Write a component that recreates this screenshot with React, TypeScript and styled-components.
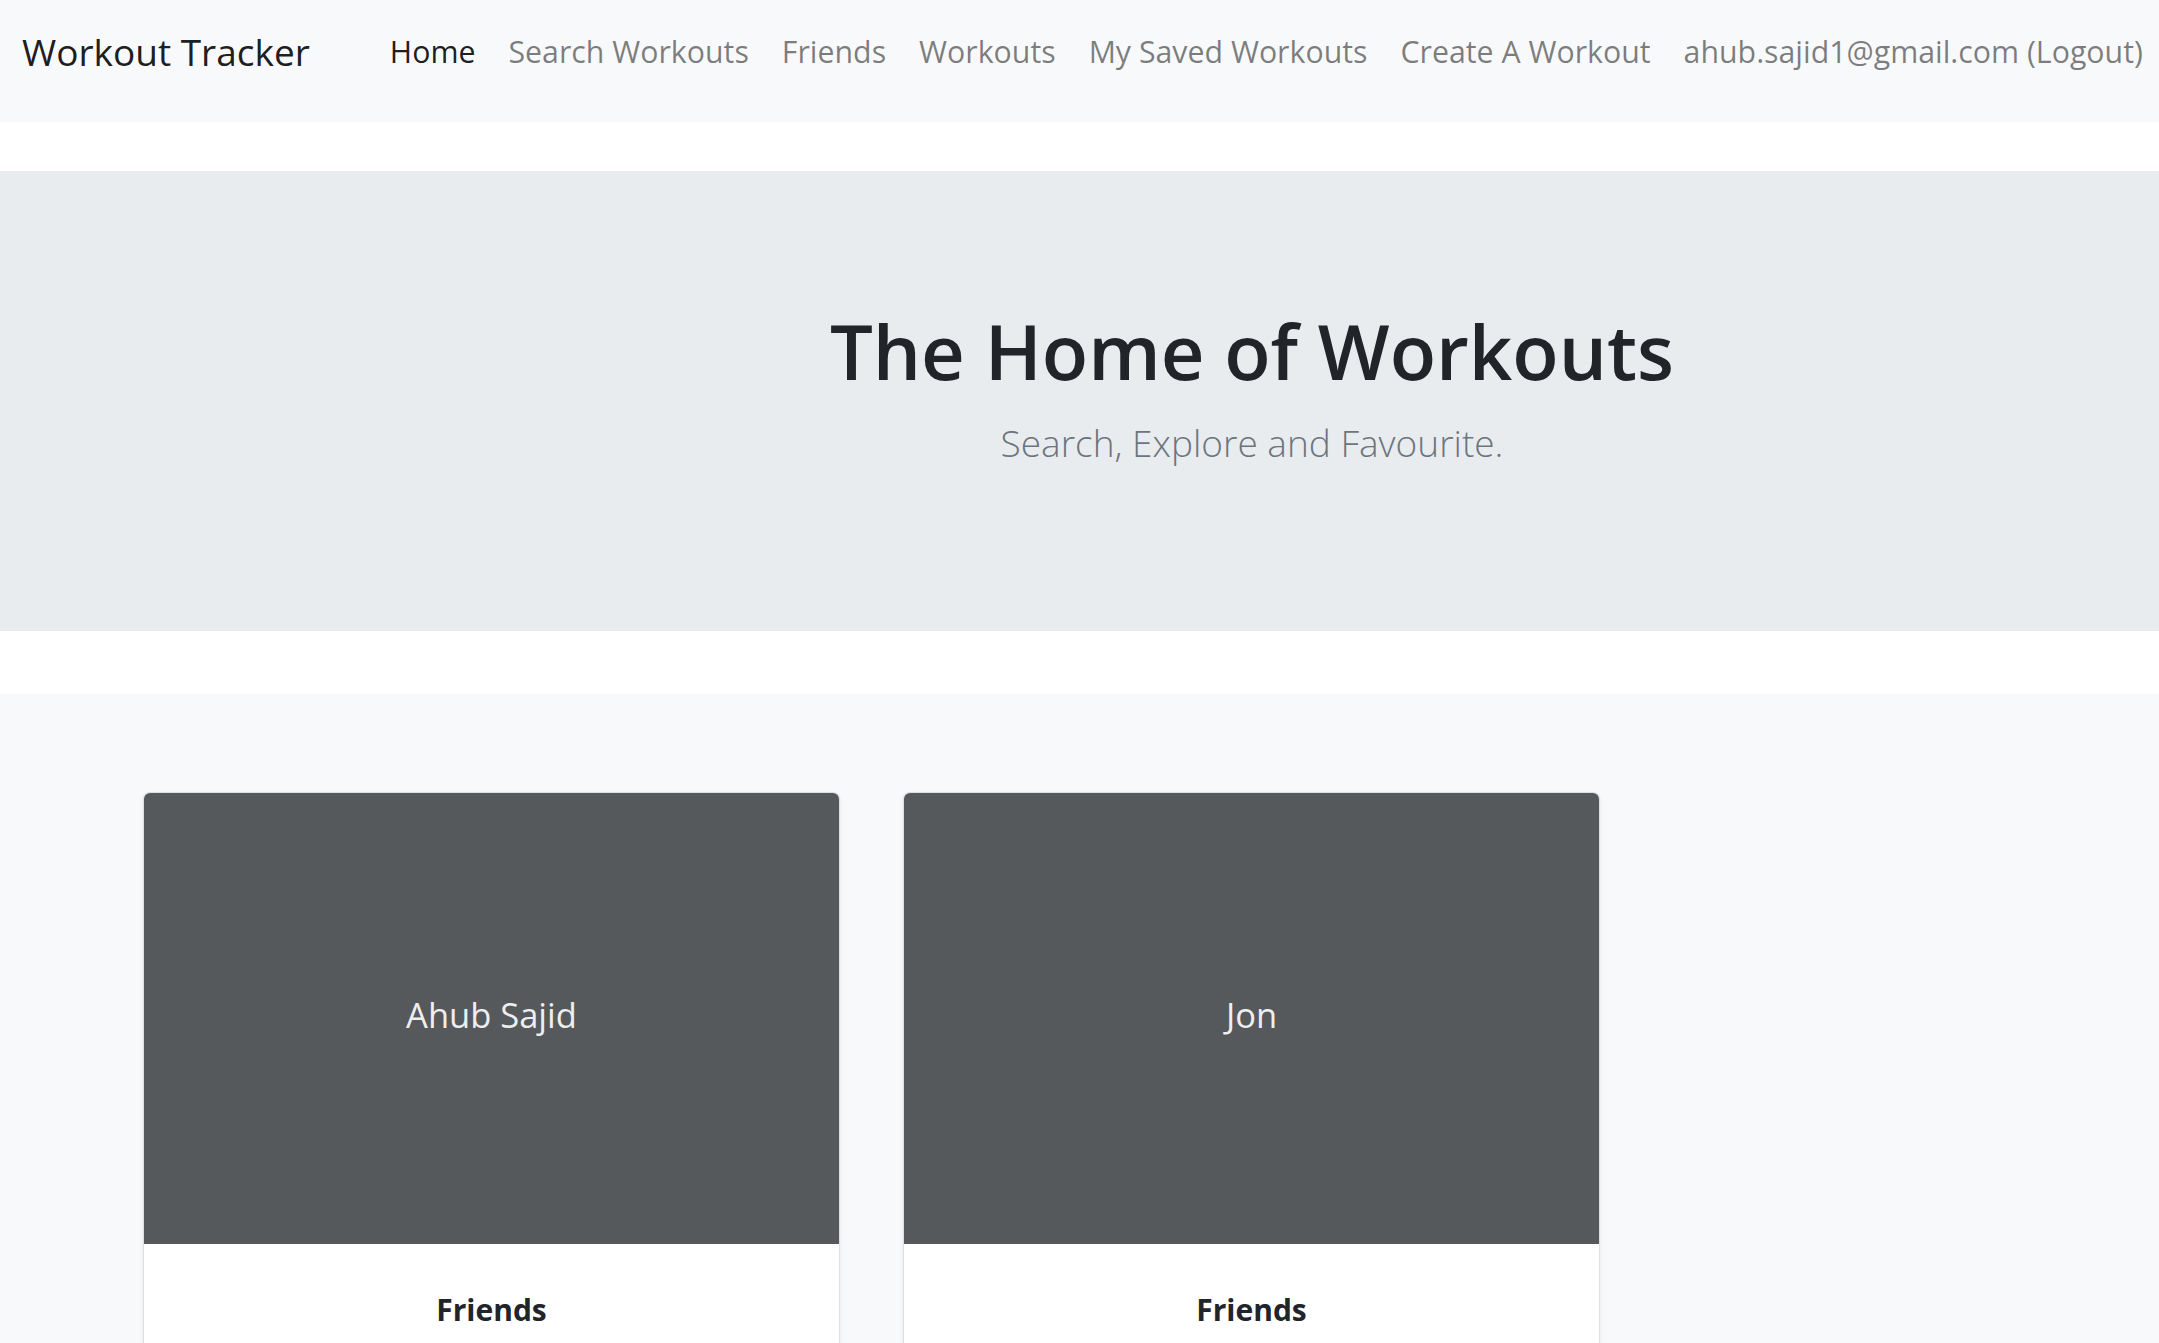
import React from "react";
import styled, { createGlobalStyle } from "styled-components";

const GlobalStyle = createGlobalStyle`
  html, body {
    margin: 0;
    padding: 0;
    overflow-x: hidden;
    background: #ffffff;
  }
  body {
    font-family: "Open Sans", "Noto Sans", "Liberation Sans", sans-serif;
    color: #212529;
  }
  * { box-sizing: border-box; }
`;

const Navbar = styled.nav`
  height: 122px;
  background: #f8f9fa;
  padding: 0 18px 18px 22px;
  display: flex;
  align-items: center;
`;

const Brand = styled.a`
  font-size: 37px;
  line-height: 1.5;
  color: rgba(0, 0, 0, 0.9);
  text-decoration: none;
  margin-right: 80px;
  white-space: nowrap;
`;

const NavList = styled.ul`
  list-style: none;
  margin: 0;
  padding: 0;
  display: flex;
  gap: 33px;
`;

const NavLink = styled.a<{ $active?: boolean }>`
  font-size: 30.3px;
  line-height: 1.5;
  color: ${(p) => (p.$active ? "rgba(0,0,0,0.9)" : "rgba(0,0,0,0.5)")};
  text-decoration: none;
  white-space: nowrap;
`;

const Jumbotron = styled.section`
  margin-top: 49px;
  height: 460px;
  background: #e9ecef;
  padding-top: 134px;
`;

const Container = styled.div`
  margin-left: 143px;
  width: 2218px;
`;

const Heading = styled.h1`
  margin: 0;
  text-align: center;
  font-size: 76px;
  font-weight: 600;
  line-height: 1.2;
  color: #212529;
`;

const Lead = styled.p`
  margin: 19px 0 0;
  text-align: center;
  font-size: 37px;
  font-weight: 300;
  line-height: 1.5;
  color: #6c757d;
`;

const Album = styled.section`
  margin-top: 63px;
  background: #f8f9fa;
  padding-top: 98px;
  min-height: 800px;
`;

const CardGrid = styled.div`
  display: grid;
  grid-template-columns: repeat(3, 697px);
  column-gap: 63px;
`;

const Card = styled.div`
  background: #ffffff;
  border: 1px solid rgba(0, 0, 0, 0.125);
  border-radius: 7px;
  box-shadow: 0 2px 4px rgba(0, 0, 0, 0.075);
  overflow: hidden;
`;

const CardImage = styled.div`
  height: 451px;
  background: #55595c;
  display: flex;
  align-items: center;
  justify-content: center;
  padding-bottom: 8px;
  color: #eeeeee;
  font-size: 34.5px;
`;

const CardBody = styled.div`
  padding: 43px 40px 40px;
  text-align: center;
`;

const CardTitle = styled.strong`
  display: block;
  font-size: 30px;
  font-weight: 700;
  line-height: 1.5;
  color: #212529;
`;

const CardText = styled.p`
  margin: 16px 0 0;
  font-size: 30px;
  color: #6c757d;
`;

const navItems = [
  "Search Workouts",
  "Friends",
  "Workouts",
  "My Saved Workouts",
  "Create A Workout",
  "ahub.sajid1@gmail.com (Logout)",
];

const friends = ["Ahub Sajid", "Jon"];

export default function App() {
  return (
    <>
      <GlobalStyle />
      <Navbar>
        <Brand href="#">Workout Tracker</Brand>
        <NavList>
          <li>
            <NavLink href="#" $active>
              Home
            </NavLink>
          </li>
          {navItems.map((item) => (
            <li key={item}>
              <NavLink href="#">{item}</NavLink>
            </li>
          ))}
        </NavList>
      </Navbar>
      <Jumbotron>
        <Container>
          <Heading>The Home of Workouts</Heading>
          <Lead>Search, Explore and Favourite.</Lead>
        </Container>
      </Jumbotron>
      <Album>
        <Container>
          <CardGrid>
            {friends.map((name) => (
              <Card key={name}>
                <CardImage>{name}</CardImage>
                <CardBody>
                  <CardTitle>Friends</CardTitle>
                  <CardText>View workouts</CardText>
                </CardBody>
              </Card>
            ))}
          </CardGrid>
        </Container>
      </Album>
    </>
  );
}
